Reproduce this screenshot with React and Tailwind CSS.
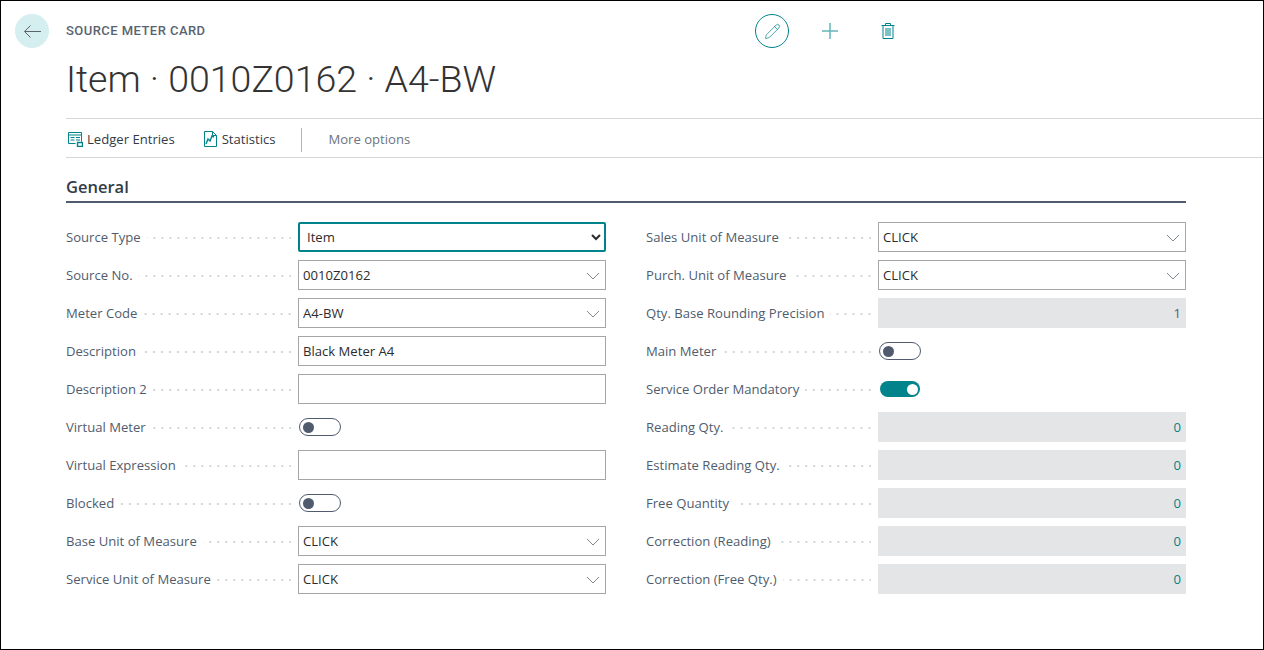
import { Pencil } from "lucide-react";

const leftFields = [
    { label: "Source Type", type: "select", value: "Item" },
    { label: "Source No.", type: "lookup", value: "0010Z0162" },
    { label: "Meter Code", type: "lookup", value: "A4-BW" },
    { label: "Description", type: "text", value: "Black Meter A4" },
    { label: "Description 2", type: "text", value: "" },
    { label: "Virtual Meter", type: "toggle", value: false },
    { label: "Virtual Expression", type: "text", value: "" },
    { label: "Blocked", type: "toggle", value: false },
    { label: "Base Unit of Measure", type: "lookup", value: "CLICK" },
    { label: "Service Unit of Measure", type: "lookup", value: "CLICK" },
];

const rightFields = [
    { label: "Sales Unit of Measure", type: "lookup", value: "CLICK" },
    { label: "Purch. Unit of Measure", type: "lookup", value: "CLICK" },
    { label: "Qty. Base Rounding Precision", type: "number", value: "1" },
    { label: "Main Meter", type: "toggle", value: false },
    { label: "Service Order Mandatory", type: "toggle", value: true },
    { label: "Reading Qty.", type: "drill", value: "0" },
    { label: "Estimate Reading Qty.", type: "drill", value: "0" },
    { label: "Free Quantity", type: "drill", value: "0" },
    { label: "Correction (Reading)", type: "drill", value: "0" },
    { label: "Correction (Free Qty.)", type: "drill", value: "0" },
];

function Chevron() {
    return (
        <svg width="14" height="8" viewBox="0 0 14 8" fill="none" stroke="#808890" strokeWidth="1" className="absolute right-[6px] top-[12px]">
            <path d="M1 1l6 6 6-6" />
        </svg>
    );
}

function Toggle({ on }) {
    if (on) {
        return (
            <div className="ml-[2px] w-[40px] h-[16px] rounded-full bg-[#00838a] flex items-center justify-end pr-[2px]">
                <div className="w-[11px] h-[11px] rounded-full bg-white" />
            </div>
        );
    }
    return (
        <div className="ml-[1px] w-[42px] h-[18px] rounded-full border border-[#505c6d] bg-white flex items-center pl-[3px]">
            <div className="w-[11px] h-[11px] rounded-full bg-[#505c6d]" />
        </div>
    );
}

function FieldValue({ field }) {
    if (field.type === "toggle") {
        return <Toggle on={field.value} />;
    }
    if (field.type === "select") {
        return (
            <select
                defaultValue={field.value}
                className="w-full h-[30px] rounded-[2px] border-2 border-[#00838a] bg-white pl-[3px] text-[13.1px] text-[#2b2b2b]"
            >
                <option>Item</option>
            </select>
        );
    }
    if (field.type === "number" || field.type === "drill") {
        return (
            <div className={`w-full h-[30px] pt-[1px] bg-[#e4e5e7] flex items-center justify-end pr-[5px] text-[13.1px] ${field.type === "drill" ? "text-[#00838a]" : "text-[#505c6d]"}`}>
                {field.value}
            </div>
        );
    }
    return (
        <div className="relative w-full h-[30px]">
            <input
                readOnly
                value={field.value}
                className="w-full h-full border border-[#a6a6a6] bg-white px-[4px] text-[13.1px] text-[#2b2b2b] outline-none"
            />
            {field.type === "lookup" && <Chevron />}
        </div>
    );
}

function FieldRow({ field }) {
    return (
        <div className="flex items-center h-[38px]">
            <div className="w-[232px] flex items-center pr-[7px] shrink-0">
                <span className="pt-[1px] text-[13.1px] text-[#505c6d] whitespace-nowrap pr-[6px]">{field.label}</span>
                <span className="mt-[2px] flex-1 h-[2px] bg-[linear-gradient(to_left,#d3d5d9_2px,transparent_2px)] bg-[length:8px_2px] bg-repeat-x bg-right" />
            </div>
            <div className="flex-1">
                <FieldValue field={field} />
            </div>
        </div>
    );
}

export default function App() {
    return (
        <div className="w-[1264px] h-[650px] box-border border border-black bg-white overflow-hidden font-['Open_Sans',sans-serif]">
            <div className="flex items-center h-[34px] mt-[13px] ml-[14px]">
                <div className="w-[34px] h-[34px] rounded-full bg-[#d5eef0] flex items-center justify-center shrink-0">
                    <svg width="17" height="13" viewBox="0 0 17 13" fill="none" stroke="#5a6470" strokeWidth="1">
                        <path d="M17 6.5H.7M6.5.5l-6 6 6 6" />
                    </svg>
                </div>
                <div className="ml-[17px] w-[689px] font-['Roboto',sans-serif] font-medium text-[13px] tracking-[0.45px] text-[#5a6470]">SOURCE METER CARD</div>
                <div className="w-[34px] h-[34px] rounded-full border border-[#00838a] flex items-center justify-center shrink-0">
                    <Pencil size={17} strokeWidth={1} color="#00838a" />
                </div>
                <div className="ml-[33px]">
                    <svg width="16" height="16" viewBox="0 0 16 16" fill="none" stroke="#63b5b9" strokeWidth="1.5" className="block">
                        <path d="M8 0v16M0 8h16" />
                    </svg>
                </div>
                <div className="ml-[43px]">
                    <svg width="14" height="16" viewBox="0 0 14 16" fill="none" stroke="#00838a" strokeWidth="1" className="block">
                        <path d="M.5 2.5h13M4.5 2.5V.5h5v2M2 2.5v13h10v-13M5 5v8M7 5v8M9 5v8" />
                    </svg>
                </div>
            </div>

            <div className="ml-[65px] mt-[9px] h-[44px] flex items-center text-[37.5px] leading-[44px] font-['Roboto',sans-serif] font-light text-[#333333] whitespace-nowrap">
                Item · 0010Z0162 · A4-BW
            </div>

            <div className="ml-[65px] mt-[17px] h-[40px] pt-[3px] border-y border-[#d5d6da] flex items-center text-[13.1px]">
                <div className="flex items-center ml-[2px] text-[#333b47]">
                    <svg width="15" height="16" viewBox="0 0 15 16" fill="none" stroke="#00838a" strokeWidth="1" className="mr-[4px]">
                        <path d="M.5 1.5h13v9M.5 1.5v11h7M.5 4h13M2.5 6.5h4M2.5 9h4M8 6.5h4M8 9h4" />
                        <path d="M9.5 11.5h5v4h-5z" strokeWidth="1.4" />
                    </svg>
                    Ledger Entries
                </div>
                <div className="flex items-center ml-[29px] text-[#333b47]">
                    <svg width="13" height="16" viewBox="0 0 13 16" fill="none" stroke="#00838a" strokeWidth="1" className="mr-[5px]">
                        <path d="M.5.5h8l4 4v11H.5zM8.5.5v4h4" />
                        <path d="M2 13l2-5 2 2 2-5 2 1" strokeWidth="1.4" />
                    </svg>
                    Statistics
                </div>
                <div className="ml-[26px] w-px h-[24px] bg-[#b0b4ba]" />
                <div className="ml-[26px] text-[#6b7480]">More options</div>
            </div>

            <div className="ml-[65px] w-[1120px] mt-[18px] h-[27px] border-b-2 border-[#505c6d] text-[16.5px] font-semibold text-[#333b47] leading-[22px]">
                General
            </div>

            <div className="ml-[65px] w-[1120px] mt-[15px] grid grid-cols-2 gap-x-[40px]">
                <div>
                    {leftFields.map((field) => (
                        <FieldRow key={field.label} field={field} />
                    ))}
                </div>
                <div>
                    {rightFields.map((field) => (
                        <FieldRow key={field.label} field={field} />
                    ))}
                </div>
            </div>
        </div>
    );
}
